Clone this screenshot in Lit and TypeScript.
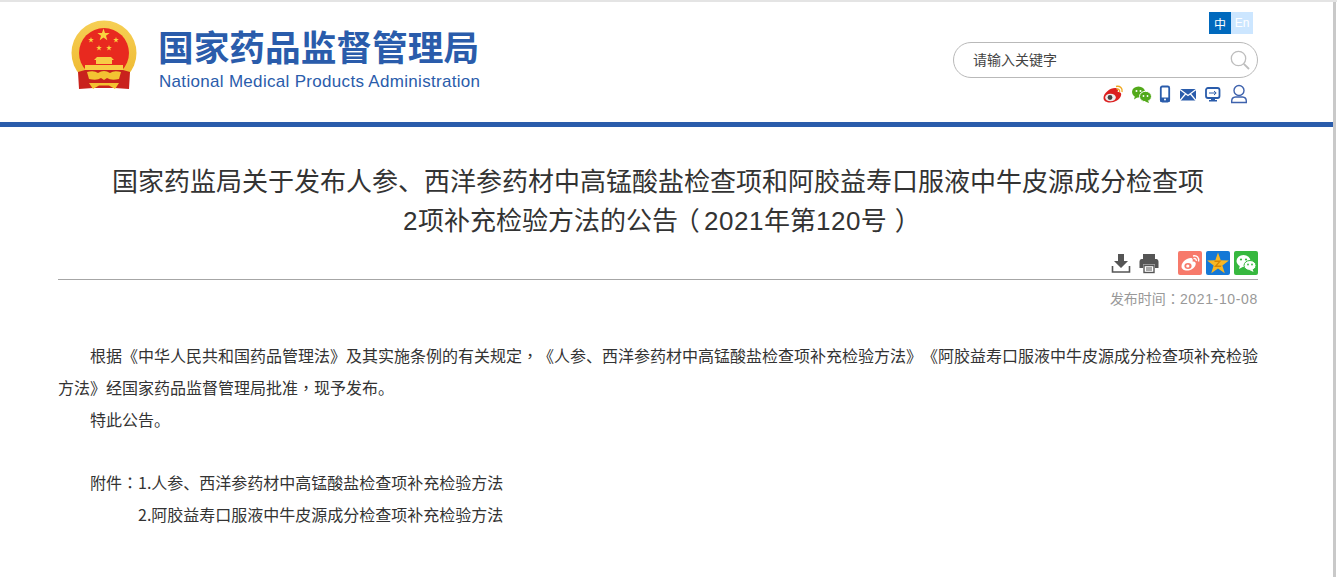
import { LitElement, html, css, svg } from "lit";
import { customElement } from "lit/decorators.js";

const star = (cx: number, cy: number, r: number, fill: string) => {
  const pts: string[] = [];
  for (let i = 0; i < 10; i++) {
    const a = -Math.PI / 2 + (i * Math.PI) / 5;
    const q = i % 2 ? r * 0.4 : r;
    pts.push(`${(cx + q * Math.cos(a)).toFixed(2)},${(cy + q * Math.sin(a)).toFixed(2)}`);
  }
  return svg`<polygon points=${pts.join(" ")} fill=${fill}></polygon>`;
};

@customElement("app-root")
export class AppRoot extends LitElement {
  static styles = css`
    :host {
      display: block;
      height: 577px;
      box-sizing: border-box;
      overflow: hidden;
      background: #fff;
      border-top: 2px solid #e4e4e4;
      font-family: "Noto Sans CJK SC", "Liberation Sans", sans-serif;
      color: #333;
      text-spacing-trim: space-all;
    }
    .page { width: 1336px; height: 575px; box-sizing: border-box; border-right: 3px solid #c9c9c9; }
    .top {
      height: 120px;
      box-sizing: border-box;
      padding: 0 75px 0 58px;
      display: flex;
      justify-content: space-between;
    }
    .brand { display: flex; align-items: flex-start; padding: 18px 0 0 11px; }
    .emblem { width: 70px; height: 72px; display: block; margin-right: 20px; }
    .names { display: flex; flex-direction: column; padding-top: 4px; }
    .cn {
      font-size: 35.7px; line-height: 44px; font-weight: 700; color: #2a5cab;
      white-space: nowrap; margin-left: -1px;
    }
    .en {
      font-family: "Liberation Sans", sans-serif; font-size: 17px; letter-spacing: .31px; line-height: 22px;
      color: #2a5cab; margin-top: 3px; white-space: nowrap;
    }
    .tools { width: 305px; display: flex; flex-direction: column; align-items: flex-end; padding-top: 10px; }
    .lang { display: flex; margin-right: 5px; }
    .lang span {
      width: 22px; height: 22px; display: flex; align-items: center; justify-content: center;
      font-size: 12px; color: #fff; background: #cce6ff; font-family: "Liberation Sans", "Noto Sans CJK SC", sans-serif;
    }
    .lang span.on { background: #0069bd; }
    .search {
      width: 305px; height: 36px; box-sizing: border-box; margin-top: 8px;
      border: 1px solid #b9b9b9; border-radius: 18px;
      display: flex; align-items: center; justify-content: space-between;
      padding: 0 6px 2px 19px; font-size: 14px; color: #444; line-height: 20px;
    }
    .search svg { display: block; margin-top: 2px; }
    .quick { display: flex; align-items: center; height: 24px; margin-top: 5px; margin-right: 6px; }
    .quick svg { display: block; }
    .bar { height: 5px; background: #2a5cab; width: 1333px; }
    .main { padding: 0 75px 0 58px; }
    h1 {
      margin: 33px 0 0; font-size: 26px; line-height: 39px; font-weight: 400; color: #333;
      text-align: center; width: 1200px;
    }
    .actions {
      height: 37px; margin-top: 5px; width: 1200px; box-sizing: border-box; padding-top: 8px;
      border-bottom: 1px solid #a6a6a6;
      display: flex; justify-content: flex-end; align-items: flex-start; gap: 4px;
    }
    .actions svg { display: block; }
    .actions .g1 { display: flex; gap: 8px; margin-right: 15px; padding-top: 1px; }
    .date { width: 1200px; text-align: right; font-size: 14px; line-height: 20px; color: #999; margin-top: 8px; }
    .body { width: 1201px; margin-top: 31px; font-size: 16px; line-height: 32px; color: #333; }
    .body p { margin: 0; text-indent: 32px; }
    .gap { height: 31px; }
    .body p.sub { text-indent: 80px; }
    .num, .tnum, .c, .po, .pc { line-height: 0; }
    .num { font-family: "Liberation Sans", sans-serif; letter-spacing: .65px; }
    .tnum { font-family: "Liberation Sans", sans-serif; letter-spacing: .5px; }
    .c { font-family: "Noto Sans CJK TC", sans-serif; }
    .po { margin-left: -.17em; margin-right: .17em; }
    .pc { margin-left: .3em; margin-right: -.3em; }
  `;

  emblem() {
    return html`<svg class="emblem" viewBox="0 0 70 72">
      <defs>
        <linearGradient id="gold" x1="0" y1="0" x2="0" y2="1"><stop offset="0" stop-color="#f6cf55"/><stop offset="1" stop-color="#eeb72c"/></linearGradient>
      </defs>
      <circle cx="35" cy="33" r="32.5" fill="url(#gold)"/>
      <circle cx="35" cy="33" r="25" fill="#e8291f"/>
      <path d="M9 52 L23 48 H47 L61 52 L60 69 L46 68 H24 L10 69 Z" fill="#c9221d"/>
      ${star(34.5, 15, 6.5, "#f9d23e")} ${star(22, 20, 3, "#f9d23e")} ${star(47, 20, 3, "#f9d23e")}
      ${star(30, 28, 3, "#f9d23e")} ${star(40, 28, 3, "#f9d23e")}
      <path d="M28 37 H42 L45 40 H25 Z M27 40 H43 V44 H27 Z" fill="#f8cc45"/>
      <rect x="16" y="45" width="38" height="5" fill="#f8cc45"/>
      <path d="M18 52 Q25 50 29 53 Q35 49 41 53 Q45 50 52 52 L50 59 Q42 61 38 58 L35 60 L32 58 Q28 61 20 59 Z" fill="#f3c232"/>
      <path d="M20 63 H50 L46 69 L40 65.5 H30 L24 69 Z" fill="#f3c232"/>
    </svg>`;
  }

  render() {
    return html`<div class="page">
      <div class="top">
        <div class="brand">
          ${this.emblem()}
          <div class="names">
            <div class="cn">国家药品监督管理局</div>
            <div class="en">National Medical Products Administration</div>
          </div>
        </div>
        <div class="tools">
          <div class="lang"><span class="on">中</span><span>En</span></div>
          <div class="search">
            <span>请输入关键字</span>
            <svg width="22" height="22" viewBox="0 0 22 22" fill="none" stroke="#bdbdbd">
              <circle cx="9.5" cy="9.5" r="7.2" stroke-width="1.3"/><path d="M14.8 14.8 L20 20" stroke-width="1.8"/>
            </svg>
          </div>
          <div class="quick">
            <svg width="150" height="24" viewBox="0 0 150 24">
              <path d="M1.5 15 C1.5 10 8 5 13 5 C16 5 16.5 7.5 15.5 9 C18 8.5 20 10 19 12.5 C18 16.5 13 19.5 8 19.5 C4.5 19.5 1.5 18 1.5 15 Z" fill="#dc1f1f"/>
              <ellipse cx="8.5" cy="14.5" rx="5.3" ry="3.8" fill="#eee"/>
              <circle cx="8" cy="14.5" r="2.4" fill="#444"/>
              <path d="M14 3.5 C18 2.5 21 5.5 20 9 M14.5 6 C16.5 5.5 18 7 17.5 9" stroke="#f0a81e" stroke-width="1.4" fill="none"/>
              <ellipse cx="36.5" cy="9" rx="6.5" ry="5.6" fill="#52a91a"/>
              <path d="M33 13 L32 16.5 L36 14 Z" fill="#52a91a"/>
              <ellipse cx="43.5" cy="13.5" rx="6" ry="5.2" fill="#52a91a" stroke="#fff" stroke-width="1"/>
              <path d="M46 17.5 L47 20 L43 18.5 Z" fill="#52a91a"/>
              <circle cx="34.5" cy="8" r="1" fill="#fff"/><circle cx="38.5" cy="8" r="1" fill="#fff"/>
              <circle cx="41.5" cy="13" r=".9" fill="#fff"/><circle cx="45.5" cy="13" r=".9" fill="#fff"/>
              <rect x="58.8" y="3.5" width="8.4" height="15" rx="1.5" fill="none" stroke="#2a5cab" stroke-width="1.8"/>
              <path d="M58 14.5 H68 V18 Q68 19 66 19 H60 Q58 19 58 18 Z" fill="#2a5cab"/>
              <circle cx="63" cy="16.6" r="1" fill="#fff"/>
              <rect x="78" y="6" width="16" height="11.5" rx="1" fill="#2a5cab"/>
              <path d="M78 6.5 L86 12.5 L94 6.5 M78 17.5 L83.5 11 M94 17.5 L88.5 11" stroke="#fff" stroke-width="1.2" fill="none"/>
              <rect x="104" y="5" width="13.5" height="10" rx="2" fill="none" stroke="#2a5cab" stroke-width="1.8"/>
              <path d="M107 10 H114 M112 8 L114.2 10 L112 12" stroke="#2a5cab" stroke-width="1" fill="none"/>
              <path d="M109 15.5 H113 V17 H115 V18.5 H107 V17 H109 Z" fill="#2a5cab"/>
              <circle cx="137" cy="7.5" r="5" fill="none" stroke="#3e62ad" stroke-width="1.4"/>
              <path d="M129.7 19.5 V18 Q129.7 14.3 133.5 14 H140.5 Q144.3 14.3 144.3 18 V19.5 Z" fill="none" stroke="#3e62ad" stroke-width="1.4"/>
            </svg>
          </div>
        </div>
      </div>
      <div class="bar"></div>
      <div class="main">
        <h1>国家药监局关于发布人参、西洋参药材中高锰酸盐检查项和阿胶益寿口服液中牛皮源成分检查项<br /><span class="tnum">2</span>项补充检验方法的公告<span class="po">（</span><span class="tnum">2021</span>年第<span class="tnum">120</span>号<span class="pc">）</span></h1>
        <div class="actions">
          <div class="g1">
            <svg width="20" height="22" viewBox="0 0 20 22" fill="#555">
              <path d="M7 2 H13 V9 H17 L10 16 L3 9 H7 Z"/>
              <path d="M1.5 14 V20 H18.5 V14" fill="none" stroke="#555" stroke-width="1.6"/>
            </svg>
            <svg width="20" height="22" viewBox="0 0 20 22" fill="#555">
              <path d="M4 2 H16 V7 H4 Z"/>
              <path d="M2.5 7 H17.5 Q19.5 7 19.5 9.5 V16 H16 V12.5 H4 V16 H.5 V9.5 Q.5 7 2.5 7 Z"/>
              <rect x="5" y="13.5" width="10" height="7" fill="#fff" stroke="#555" stroke-width="1.4"/>
              <path d="M7 16 H13 M7 18 H13" stroke="#555"/>
            </svg>
          </div>
          <svg width="24" height="24" viewBox="0 0 24 24">
            <rect width="24" height="24" rx="2" fill="#f77a6b"/>
            <path d="M3.5 15.5 C3.5 11 9 7 12.5 7 C15 7 15 9 14.5 10.5 C17 10 18.5 11.5 17.5 14 C16.5 17.5 12.5 19.5 9 19.5 C6 19.5 3.5 18 3.5 15.5 Z" fill="#fff"/>
            <ellipse cx="10" cy="15" rx="3.6" ry="2.9" fill="#f77a6b"/><circle cx="9.8" cy="15" r="1.6" fill="#fff"/>
            <path d="M15 5 C19 4 21.5 7 20.5 10.5 M15.5 7.7 C17.3 7.2 18.6 8.4 18.2 10" stroke="#fff" stroke-width="1.4" fill="none"/>
          </svg>
          <svg width="24" height="24" viewBox="0 0 24 24">
            <rect width="24" height="24" rx="2" fill="#1578d6"/>
            ${star(12, 13, 11.5, "#f9b723")}
            <path d="M8.5 9.5 H15.5 L11 14.5 H15.5 L15 16 H8 L12.5 11 H8.5 Z" fill="#d98500"/>
          </svg>
          <svg width="24" height="24" viewBox="0 0 24 24">
            <rect width="24" height="24" rx="2" fill="#37b83f"/>
            <ellipse cx="9.5" cy="10" rx="7" ry="6" fill="#fff"/>
            <path d="M6 14 L5 18 L9.5 15.5 Z" fill="#fff"/>
            <ellipse cx="16" cy="14.5" rx="6" ry="5" fill="#fff" stroke="#37b83f"/>
            <path d="M18.5 18 L19.5 21 L15.5 19 Z" fill="#fff"/>
            <circle cx="7" cy="8.5" r="1.1" fill="#37b83f"/><circle cx="12" cy="8.5" r="1.1" fill="#37b83f"/>
            <circle cx="14" cy="13.5" r=".9" fill="#37b83f"/><circle cx="18" cy="13.5" r=".9" fill="#37b83f"/>
          </svg>
        </div>
        <div class="date">发布时间<span class="c">：</span><span class="num">2021-10-08</span></div>
        <div class="body">
          <p>根据《中华人民共和国药品管理法》及其实施条例的有关规定<span class="c">，</span>《人参、西洋参药材中高锰酸盐检查项补充检验方法》《阿胶益寿口服液中牛皮源成分检查项补充检验方法》经国家药品监督管理局批准<span class="c">，</span>现予发布。</p>
          <p>特此公告。</p>
          <div class="gap"></div>
          <p>附件<span class="c">：</span>1.人参、西洋参药材中高锰酸盐检查项补充检验方法</p>
          <p class="sub">2.阿胶益寿口服液中牛皮源成分检查项补充检验方法</p>
        </div>
      </div>
    </div>`;
  }
}
